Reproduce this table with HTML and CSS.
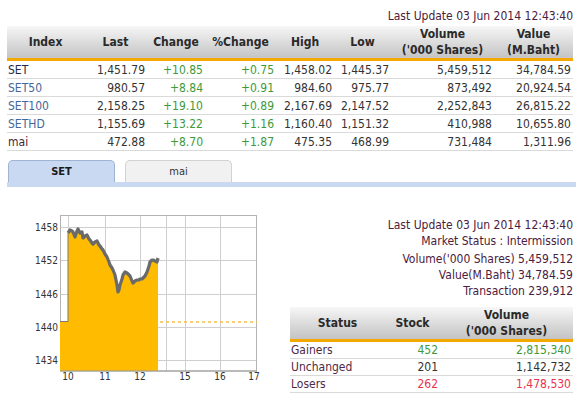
FILE: index.html
```html
<!DOCTYPE html>
<html>
<head>
<meta charset="utf-8">
<link rel="stylesheet" href="styles.css">
</head>
<body>
<div class="page">
  <div class="update top-update">Last Update 03 Jun 2014 12:43:40</div>
  <table class="grid idx">
    <colgroup>
      <col style="width:77px"><col style="width:63px"><col style="width:58px"><col style="width:71px"><col style="width:58px"><col style="width:57px"><col style="width:103px"><col style="width:79px">
    </colgroup>
    <thead>
      <tr><th>Index</th><th>Last</th><th>Change</th><th>%Change</th><th>High</th><th>Low</th><th>Volume<br>('000 Shares)</th><th>Value<br>(M.Baht)</th></tr>
    </thead>
    <tbody>
      <tr><td class="name n-set">SET</td><td>1,451.79</td><td class="up">+10.85</td><td class="up">+0.75</td><td>1,458.02</td><td>1,445.37</td><td>5,459,512</td><td>34,784.59</td></tr>
      <tr><td class="name n-blue">SET50</td><td>980.57</td><td class="up">+8.84</td><td class="up">+0.91</td><td>984.60</td><td>975.77</td><td>873,492</td><td>20,924.54</td></tr>
      <tr><td class="name n-blue">SET100</td><td>2,158.25</td><td class="up">+19.10</td><td class="up">+0.89</td><td>2,167.69</td><td>2,147.52</td><td>2,252,843</td><td>26,815.22</td></tr>
      <tr><td class="name n-blue">SETHD</td><td>1,155.69</td><td class="up">+13.22</td><td class="up">+1.16</td><td>1,160.40</td><td>1,151.32</td><td>410,988</td><td>10,655.80</td></tr>
      <tr><td class="name n-mai">mai</td><td>472.88</td><td class="up">+8.70</td><td class="up">+1.87</td><td>475.35</td><td>468.99</td><td>731,484</td><td>1,311.96</td></tr>
    </tbody>
  </table>

  <div class="tabs">
    <div class="tab active">SET</div>
    <div class="tab">mai</div>
  </div>
  <div class="tabband"></div>

  <div class="lower">
    <div class="chart">
      <svg width="262" height="190" viewBox="0 200 262 190" xmlns="http://www.w3.org/2000/svg">
        <g stroke="#cfcfcf" stroke-width="1">
          <line x1="60" y1="227.5" x2="257" y2="227.5"/>
          <line x1="60" y1="260.5" x2="257" y2="260.5"/>
          <line x1="60" y1="294.5" x2="257" y2="294.5"/>
          <line x1="60" y1="327.5" x2="257" y2="327.5"/>
          <line x1="60" y1="360.5" x2="257" y2="360.5"/>
          <line x1="68.5" y1="215" x2="68.5" y2="371"/>
          <line x1="105.5" y1="215" x2="105.5" y2="371"/>
          <line x1="140.5" y1="215" x2="140.5" y2="371"/>
          <line x1="166.5" y1="215" x2="166.5" y2="371"/>
          <line x1="185.5" y1="215" x2="185.5" y2="371"/>
          <line x1="220.5" y1="215" x2="220.5" y2="371"/>
        </g>
        <rect x="60.5" y="215.5" width="196" height="155.5" fill="none" stroke="#b4b4b4"/>
        <path fill="#ffbb00" d="M60,371 L60,322 L68,322 L68,233 L70,230 L72,231 L73,232 L75,237 L77,231 L78,229 L80,233 L82,232 L83,238 L85,236 L87,235 L89,239 L90,240 L92,243 L93,244 L95,242 L97,241 L99,245 L100,246 L102,249 L103,250 L105,254 L107,257 L109,262 L110,265 L112,268 L113,270 L115,275 L116,280 L117,285 L118,292 L119,290 L120,285 L122,279 L123,275 L125,272 L127,273 L129,275 L130,276 L132,281 L133,283 L135,281 L137,280 L139,280 L140,279 L142,279 L143,278 L145,276 L147,272 L149,266 L150,262 L152,260 L153,260 L155,261 L157,262 L158,258 L158,371 Z"/>
        <path fill="none" stroke="#777" stroke-width="1" d="M60,321.5 L68,321.5 L68,233"/>
        <path fill="none" stroke="#6a6a6a" stroke-width="3.2" stroke-linejoin="round" d="M68,233 L70,230 L72,231 L73,232 L75,237 L77,231 L78,229 L80,233 L82,232 L83,238 L85,236 L87,235 L89,239 L90,240 L92,243 L93,244 L95,242 L97,241 L99,245 L100,246 L102,249 L103,250 L105,254 L107,257 L109,262 L110,265 L112,268 L113,270 L115,275 L116,280 L117,285 L118,292 L119,290 L120,285 L122,279 L123,275 L125,272 L127,273 L129,275 L130,276 L132,281 L133,283 L135,281 L137,280 L139,280 L140,279 L142,279 L143,278 L145,276 L147,272 L149,266 L150,262 L152,260 L153,260 L155,261 L157,262 L158,258"/>
        <line x1="160" y1="322" x2="257" y2="322" stroke="#f7c04a" stroke-width="1.5" stroke-dasharray="3,3"/>
        <line x1="60" y1="371" x2="257" y2="371" stroke="#999" stroke-width="1"/>
        <g class="ax" text-anchor="end">
          <text x="58" y="231">1458</text>
          <text x="58" y="264">1452</text>
          <text x="58" y="298">1446</text>
          <text x="58" y="331">1440</text>
          <text x="58" y="364">1434</text>
        </g>
        <g class="ax" text-anchor="middle">
          <text x="68" y="380">10</text>
          <text x="105" y="380">11</text>
          <text x="140" y="380">12</text>
          <text x="185" y="380">15</text>
          <text x="220" y="380">16</text>
          <text x="254" y="380">17</text>
        </g>
      </svg>
    </div>
    <div class="panel">
      <div class="info">
        <div>Last Update 03 Jun 2014 12:43:40</div>
        <div>Market Status : Intermission</div>
        <div class="gap">Volume('000 Shares) 5,459,512</div>
        <div>Value(M.Baht) 34,784.59</div>
        <div>Transaction 239,912</div>
      </div>
      <table class="grid stat">
        <colgroup><col style="width:95px"><col style="width:55px"><col style="width:133px"></colgroup>
        <thead>
          <tr><th>Status</th><th>Stock</th><th>Volume<br>('000 Shares)</th></tr>
        </thead>
        <tbody>
          <tr><td class="name lbl">Gainers</td><td class="up">452</td><td class="up">2,815,340</td></tr>
          <tr><td class="name lbl">Unchanged</td><td class="flat">201</td><td class="flat">1,142,732</td></tr>
          <tr><td class="name lbl">Losers</td><td class="down">262</td><td class="down">1,478,530</td></tr>
        </tbody>
      </table>
    </div>
  </div>
</div>
</body>
</html>
```

FILE: styles.css
```css
html, body {
  margin: 0;
  padding: 0;
  background: #fff;
}
body {
  font-family: "DejaVu Sans Condensed", "DejaVu Sans", sans-serif;
  font-stretch: condensed;
  font-size: 12px;
  color: #333;
}
.page {
  width: 583px;
  padding: 8px 0 0 7px;
  box-sizing: border-box;
}
.update {
  color: #4a2040;
  text-align: right;
}
.top-update {
  width: 566px;
  line-height: 16px;
  height: 18px;
}
.grid {
  border-collapse: separate;
  border-spacing: 0;
  table-layout: fixed;
}
.grid th {
  box-sizing: border-box;
  height: 35px;
  padding: 0;
  font-weight: bold;
  line-height: 16px;
  color: #2a2a2a;
  background: linear-gradient(#f7f7f7, #d7d7d7 60%, #c4c4c4);
  border-bottom: 3px solid #f5a800;
  text-align: center;
}
.grid td {
  box-sizing: border-box;
  height: 18px;
  padding: 1px 2px 0 0;
  line-height: 16px;
  border-bottom: 1px solid #dadada;
  text-align: right;
  white-space: nowrap;
  color: #333;
}
.idx {
  width: 566px;
}
.grid td.name {
  text-align: left;
  padding-left: 1px;
}
.n-set { color: #1f2a44 !important; }
.n-blue { color: #46679a !important; }
.n-mai { color: #4a1f3a !important; }
.grid td.up { color: #3d9a3a; }
.grid td.down { color: #e8344e; }
.grid td.flat { color: #333; }
.grid td.lbl { color: #4f2a45; }

.tabs {
  display: flex;
  gap: 10px;
  margin-top: 9px;
  padding-left: 1px;
  height: 22px;
}
.tab {
  box-sizing: border-box;
  width: 107px;
  height: 22px;
  line-height: 21px;
  text-align: center;
  font-size: 11px;
  border: 1px solid #d2d2d2;
  border-bottom: none;
  border-radius: 5px 5px 0 0;
  background: #f1f1f1;
  color: #333;
}
.tab.active {
  background: #c9d9f1;
  border-color: #9fb3d3;
  font-weight: bold;
  color: #1a1a1a;
}
.tabband {
  height: 5px;
  width: 569px;
  background: #c9d9f1;
}

.lower {
  display: flex;
  margin-left: -7px;
}
.chart {
  width: 290px;
  padding-top: 13px;
}
.chart svg {
  display: block;
}
.ax {
  font-family: "DejaVu Sans Condensed", "DejaVu Sans", sans-serif;
  font-stretch: condensed;
  font-size: 10px;
  fill: #333;
}
.panel {
  width: 283px;
  padding-top: 30px;
}
.info {
  text-align: right;
  color: #4a2040;
  line-height: 16px;
}
.info .gap {
  margin-top: 2px;
}
.stat {
  width: 283px;
  margin-top: 8px;
}
.stat th {
  height: 34px;
}
.stat td {
  height: 16px;
  padding-top: 1px;
  line-height: 15px;
}
```
